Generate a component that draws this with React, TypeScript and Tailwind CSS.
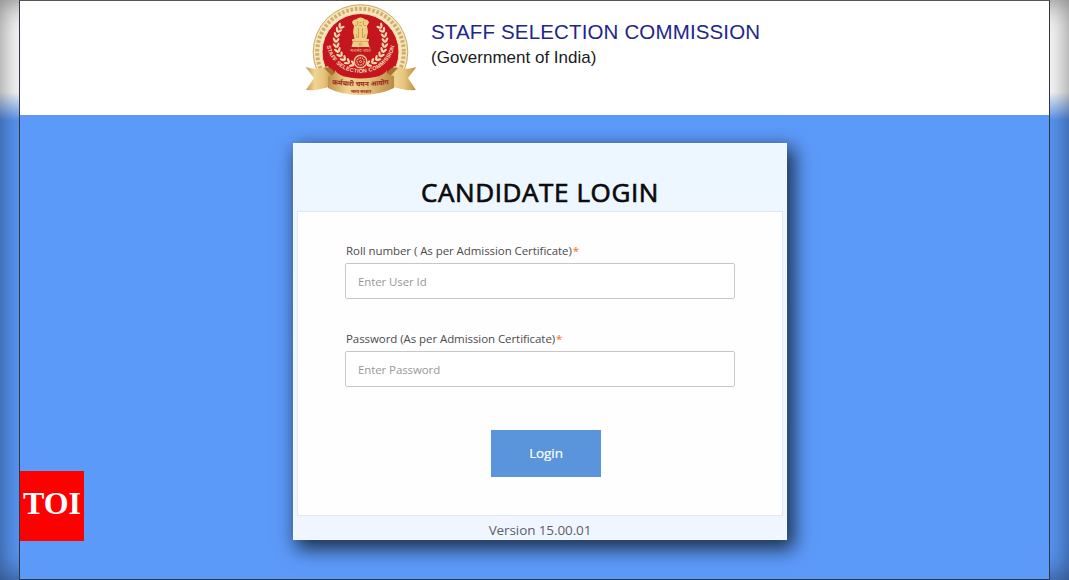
const FIELDS = [
  { id: 'roll', label: 'Roll number ( As per Admission Certificate)', placeholder: 'Enter User Id', type: 'text' },
  { id: 'password', label: 'Password (As per Admission Certificate)', placeholder: 'Enter Password', type: 'password' },
];

// Leaves of one half of the wreath, from the bottom to the tip
const LEAVES = [112, 124, 136, 148, 160, 172, 184, 196, 208, 219];

function Wreath() {
  return (
    <g fill="#f3d9ab">
      {LEAVES.map((a) => (
        <g key={a} transform={`rotate(${a}) translate(24.5 0)`}>
          <ellipse cx="1.8" cy="0" rx="1.2" ry="2.9" transform="rotate(-32)" />
          <ellipse cx="-1.8" cy="0" rx="1.2" ry="2.700" transform="rotate(32)" />
        </g>
      ))}
    </g>
  );
}

function Emblem() {
  return (
    <svg viewBox="0 0 114 96" className="h-24 w-[114px] shrink-0">
      <defs>
        <linearGradient id="gold" x1="0" x2="1">
          <stop offset="0" stopColor="#c0924a" />
          <stop offset=".3" stopColor="#f0d492" />
          <stop offset=".6" stopColor="#e6c47c" />
          <stop offset="1" stopColor="#bb8a44" />
        </linearGradient>
        <clipPath id="above-ribbon">
          <path d="M0 0 H114 V84 H0 Z" />
        </clipPath>
        <path id="motto" d="M22.800 45 A34 31 0 0 0 90.200 45" />
        <path id="banner" d="M26 83 Q56.500 87.500 87 83" />
      </defs>
      <g clipPath="url(#above-ribbon)">
        <circle cx="56.500" cy="51" r="47.300" fill="#f6e6bd" stroke="#cda861" strokeWidth="1" />
        <circle cx="56.500" cy="51" r="43.300" fill="none" stroke="#cfae6b" strokeWidth="4" strokeDasharray="2.600 1.800" />
        <circle cx="56.500" cy="51" r="38.500" fill="#c5161f" stroke="#f3dfae" strokeWidth="1" />
      </g>
      <g transform="translate(56.500 40)">
        <Wreath />
        <g transform="scale(-1 1)">
          <Wreath />
        </g>
      </g>

      {/* lion capital */}
      <g fill="#efcf83">
        <path d="M50 25 L48 21.500 Q49 18 52 18.500 Q54 16.500 56.500 16.500 Q59 16.500 61 18.500 Q64 18 65 21.500 L63 25 L64 31 L62.500 38 H50.500 L49 31 Z" />
        <rect x="48" y="38" width="17" height="2.500" rx=".5" />
        <path d="M49 40.500 H64 L65.500 46 H47.500 Z" />
      </g>
      <path d="M53.500 20 V24 M59.500 20 V24 M54.500 27 V37 M58.500 27 V37 M52 33 L53 37 M61 33 L60 37 M51 24.500 H53 M60 24.500 H62 M55.500 21.500 H57.500 M55 24.500 H58" fill="none" stroke="#c08b45" strokeWidth=".7" />
      <circle cx="56.500" cy="43.300" r="1.200" fill="none" stroke="#b57c38" strokeWidth=".6" />
      <text x="56.500" y="51" textAnchor="middle" fill="#eaba8c" className="font-['Noto_Sans',sans-serif] text-[4.200px] leading-none">
        सत्यमेव जयते
      </text>

      {/* chakra */}
      <g transform="translate(56.500 60.500)" fill="none" stroke="#eac48e">
        <circle r="6.200" fill="#c5161f" strokeWidth="1.400" />
        <circle r="3.600" strokeWidth="1.600" strokeDasharray="1 .8" />
        <circle r="1" strokeWidth="1" />
      </g>

      <text fill="#f6dfb4" className="font-['Liberation_Sans',sans-serif] text-[5.600px] font-bold">
        <textPath href="#motto" startOffset="50%" textAnchor="middle" textLength="94">
          STAFF SELECTION COMMISSION
        </textPath>
      </text>

      {/* ribbon */}
      <path d="M1.500 66 Q12 70 24 65 L32 78 L28 85 Q14 90 2 89 L10 77 Z" fill="url(#gold)" />
      <path d="M112.500 66 Q102 70 90 65 L82 78 L86 85 Q100 90 112 89 L104 77 Z" fill="url(#gold)" />
      <path d="M20 67 Q27 65 30 71 Q31 77 24 77 L25 87 L33 80 Z M94 67 Q87 65 84 71 Q83 77 90 77 L89 87 L81 80 Z" fill="#a8742f" />
      <path d="M24 75 Q31 75 31 69 Q35 77 56.500 77.500 Q79 77 83 69 Q83 75 90 75 V87 Q76 94 57 94 Q37 94 24 87 Z" fill="url(#gold)" />
      <text fill="#9c261d" className="font-['Noto_Sans',sans-serif] text-[6.800px] leading-none font-bold">
        <textPath href="#banner" startOffset="50%" textAnchor="middle">
          कर्मचारी चयन आयोग
        </textPath>
      </text>
      <text x="57" y="92.300" textAnchor="middle" fill="#9c261d" className="font-['Noto_Sans',sans-serif] text-[4px] leading-none font-bold">
        भारत सरकार
      </text>
    </svg>
  );
}

function Edge({ side }: { side: 'left' | 'right' }) {
  return (
    <div className="h-full w-[19px] shrink-0 overflow-hidden bg-[linear-gradient(to_bottom,#fff_0px,#fff_92px,#5c9afa_120px,#5c9afa_100%)]">
      <div
        className={
          side === 'left'
            ? 'h-full w-12 shadow-[inset_0_0_30px_rgba(0,0,0,0.55)]'
            : '-ml-[29px] h-full w-12 shadow-[inset_0_0_30px_rgba(0,0,0,0.55)]'
        }
      />
    </div>
  );
}

export default function App() {
  return (
    <div className="flex h-[580px] w-[1069px] overflow-hidden font-['Open_Sans',sans-serif]">
      <Edge side="left" />
      <main className="relative flex h-full w-[1031px] flex-col border border-[#303743] border-t-[#555] bg-[#5c9afa]">
        <header className="flex h-[114px] shrink-0 bg-white pl-[284px]">
          <Emblem />
          <div className="ml-[13px] pt-[19px] font-['Liberation_Sans',sans-serif] whitespace-nowrap">
            <div className="text-[20.500px] leading-6 tracking-[0.15px] text-[#20268c]">STAFF SELECTION COMMISSION</div>
            <div className="mt-0.5 text-[17px] leading-6 text-[#1b1b1b]">(Government of India)</div>
          </div>
        </header>

        <section className="mt-7 ml-[273px] flex h-[397px] w-[494px] shrink-0 flex-col border border-[#f7fbff] bg-linear-to-b from-[#edf7ff] to-[#f0f6ff] px-[3px] shadow-[5px_7px_18px_2px_rgba(0,0,0,0.7)]">
          <h1 className="h-[67px] shrink-0 pt-[29px] text-center text-[26px] leading-[38px] tracking-[0.6px] text-[#0b0b0d] [-webkit-text-stroke:0.7px]">
            CANDIDATE LOGIN
          </h1>
          <form className="flex h-[305px] shrink-0 flex-col border border-[#e2e9ee] bg-[#fefefe] px-[47px] pt-[29px]">
            {FIELDS.map((f) => (
              <div key={f.id} className="mb-[30px] h-[58px] shrink-0">
                <label htmlFor={f.id} className="block h-[22px] pt-px pl-px text-[11.500px] leading-[18px] tracking-[-0.07px] whitespace-nowrap text-[#4c4c4c]">
                  {f.label}
                  <span className="ml-px font-semibold text-[#f58233]">*</span>
                </label>
                <input
                  id={f.id}
                  type={f.type}
                  placeholder={f.placeholder}
                  className="block h-9 w-[390px] rounded-[2px] border border-[#c7c7c7] bg-white px-3 pt-px text-[11.500px] tracking-[-0.1px] placeholder:text-[#999]"
                />
              </div>
            ))}
            <button type="button" className="mt-[13px] ml-[146px] h-[47px] w-[110px] shrink-0 bg-[#5a94da] text-[13.500px] tracking-[-0.1px] text-white [-webkit-text-stroke:0.2px]">
              Login
            </button>
          </form>
          <p className="text-center text-[13.500px] leading-[28px] tracking-[-0.1px] text-[#5b6066]">Version 15.00.01</p>
        </section>

        <div className="absolute top-[470px] left-0 flex h-[70px] w-16 justify-center bg-[#fe0000] pt-3 font-['Liberation_Serif',serif] text-[32px] leading-10 font-bold text-white">
          TOI
        </div>
      </main>
      <Edge side="right" />
    </div>
  );
}
